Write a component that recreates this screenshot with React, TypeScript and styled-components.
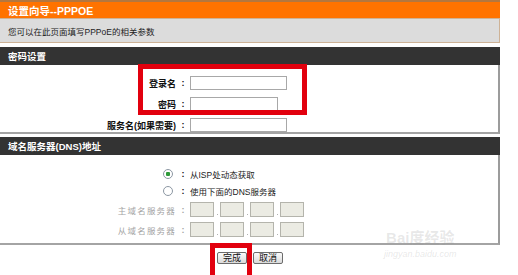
import styled, { createGlobalStyle } from "styled-components"

const GlobalStyle = createGlobalStyle`
    body {
        margin: 0;
        background: #fff;
        font-family: "Liberation Sans", "Noto Sans CJK SC", sans-serif;
    }
`

const Page = styled.div`
    position: relative;
    width: 500px;
    height: 275px;
    overflow: hidden;
`

const TitleBar = styled.div`
    height: 16px;
    border-top: 2px solid #b4773f;
    background: #ff7300;
    color: #fff;
    font-weight: bold;
    font-size: 10.5px;
    padding-left: 8px;
    display: flex;
    align-items: center;
`

const InfoRow = styled.div`
    height: 23px;
    border: 1px solid #cdb296;
    border-left: none;
    background: #dcdcdc;
    color: #222;
    font-size: 8.5px;
    padding-left: 8px;
    display: flex;
    align-items: center;
    margin-bottom: 4px;
`

const Section = styled.div`
    margin-bottom: 3px;
`

const SectionHeader = styled.div`
    height: 18px;
    background: #333;
    color: #fff;
    font-weight: bold;
    font-size: 9.5px;
    padding-left: 8px;
    display: flex;
    align-items: center;
`

const SectionBody = styled.div<{ $pad: string }>`
    border-right: 2px solid #9c9c9c;
    border-bottom: 2px solid #a4a4a4;
    padding: ${p => p.$pad};
    display: flex;
    flex-direction: column;
`

const Row = styled.div<{ $h: number; $mb?: number }>`
    height: ${p => p.$h}px;
    margin-bottom: ${p => p.$mb || 0}px;
    display: flex;
    align-items: center;
`

const Label = styled.div<{ $muted?: boolean }>`
    width: 176px;
    text-align: right;
    font-size: ${p => (p.$muted ? "8.5px" : "9px")};
    font-weight: ${p => (p.$muted ? "normal" : "bold")};
    letter-spacing: ${p => (p.$muted ? "1.2px" : "0")};
    color: ${p => (p.$muted ? "#a4a4a4" : "#111")};
    display: flex;
    justify-content: flex-end;
    align-items: center;
`

const Colon = styled.div<{ $muted?: boolean }>`
    width: 14px;
    text-align: center;
    font-size: 9px;
    font-weight: bold;
    color: ${p => (p.$muted ? "#a4a4a4" : "#111")};
`

const TextInput = styled.div<{ $w: number }>`
    width: ${p => p.$w}px;
    height: 14px;
    box-sizing: border-box;
    border: 1px solid #a8a8a8;
    background: #fff;
`

const Radio = styled.span<{ $checked?: boolean }>`
    width: 10px;
    height: 10px;
    box-sizing: border-box;
    border-radius: 50%;
    border: 1px solid #8c97a3;
    background: ${p =>
        p.$checked
            ? "radial-gradient(circle, #2f9a3a 0 2px, #fff 2.5px)"
            : "#fff"};
    margin-right: 3px;
`

const OptionText = styled.span`
    font-size: 8.5px;
    color: #222;
`

const IpBoxes = styled.div`
    display: flex;
    align-items: flex-end;
`

const IpBox = styled.div`
    width: 24px;
    height: 15px;
    box-sizing: border-box;
    border: 1px solid #b4b4ac;
    background: #ebebe3;
`

const IpDot = styled.span`
    width: 6px;
    height: 3px;
    display: flex;
    justify-content: center;
    &::after {
        content: "";
        width: 1px;
        height: 1px;
        background: #b0b0b0;
    }
`

const Buttons = styled.div`
    display: flex;
    justify-content: center;
    gap: 6px;
    margin-top: 7px;
`

const Button = styled.button`
    height: 12px;
    box-sizing: border-box;
    padding: 0 5px;
    border: 1px solid #6c6c6c;
    border-radius: 2px;
    background: linear-gradient(#fbfbfb, #dadada);
    font-family: inherit;
    font-size: 9px;
    line-height: 10px;
    color: #111;
`

const Mark = styled.div<{ $x: number; $y: number; $w: number; $h: number }>`
    position: absolute;
    left: ${p => p.$x}px;
    top: ${p => p.$y}px;
    width: ${p => p.$w}px;
    height: ${p => p.$h}px;
    box-sizing: border-box;
    border: 5px solid #e2000e;
    pointer-events: none;
`

const Watermark = styled.div`
    position: absolute;
    left: 384px;
    top: 228px;
    color: rgba(150, 150, 150, 0.22);
    text-align: center;
    white-space: nowrap;
    pointer-events: none;
`

const WmTop = styled.div`
    font-size: 15px;
    font-weight: bold;
    line-height: 20px;
`

const WmBottom = styled.div`
    font-size: 9px;
    font-style: italic;
    line-height: 12px;
`

function IpField() {
    return (
        <IpBoxes>
            <IpBox />
            <IpDot />
            <IpBox />
            <IpDot />
            <IpBox />
            <IpDot />
            <IpBox />
        </IpBoxes>
    )
}

export default function App() {
    return (
        <Page>
            <GlobalStyle />
            <TitleBar>设置向导--PPPOE</TitleBar>
            <InfoRow>您可以在此页面填写PPPoE的相关参数</InfoRow>

            <Section>
                <SectionHeader>密码设置</SectionHeader>
                <SectionBody $pad="11px 0 0">
                    <Row $h={14} $mb={7}>
                        <Label>登录名</Label>
                        <Colon>:</Colon>
                        <TextInput $w={97} />
                    </Row>
                    <Row $h={14} $mb={7}>
                        <Label>密码</Label>
                        <Colon>:</Colon>
                        <TextInput $w={88} />
                    </Row>
                    <Row $h={14}>
                        <Label>服务名(如果需要)</Label>
                        <Colon>:</Colon>
                        <TextInput $w={97} />
                    </Row>
                </SectionBody>
            </Section>

            <Section>
                <SectionHeader>域名服务器(DNS)地址</SectionHeader>
                <SectionBody $pad="10px 0 6px">
                    <Row $h={17}>
                        <Label><Radio $checked /></Label>
                        <Colon>:</Colon>
                        <OptionText>从ISP处动态获取</OptionText>
                    </Row>
                    <Row $h={17} $mb={3}>
                        <Label><Radio /></Label>
                        <Colon>:</Colon>
                        <OptionText>使用下面的DNS服务器</OptionText>
                    </Row>
                    <Row $h={15} $mb={5}>
                        <Label $muted>主域名服务器</Label>
                        <Colon $muted>:</Colon>
                        <IpField />
                    </Row>
                    <Row $h={15}>
                        <Label $muted>从域名服务器</Label>
                        <Colon $muted>:</Colon>
                        <IpField />
                    </Row>
                </SectionBody>
            </Section>

            <Buttons>
                <Button>完成</Button>
                <Button>取消</Button>
            </Buttons>

            <Mark $x={138} $y={64} $w={169} $h={51} />
            <Mark $x={210} $y={243} $w={42} $h={40} />

            <Watermark>
                <WmTop>Bai度经验</WmTop>
                <WmBottom>jingyan.baidu.com</WmBottom>
            </Watermark>
        </Page>
    )
}
